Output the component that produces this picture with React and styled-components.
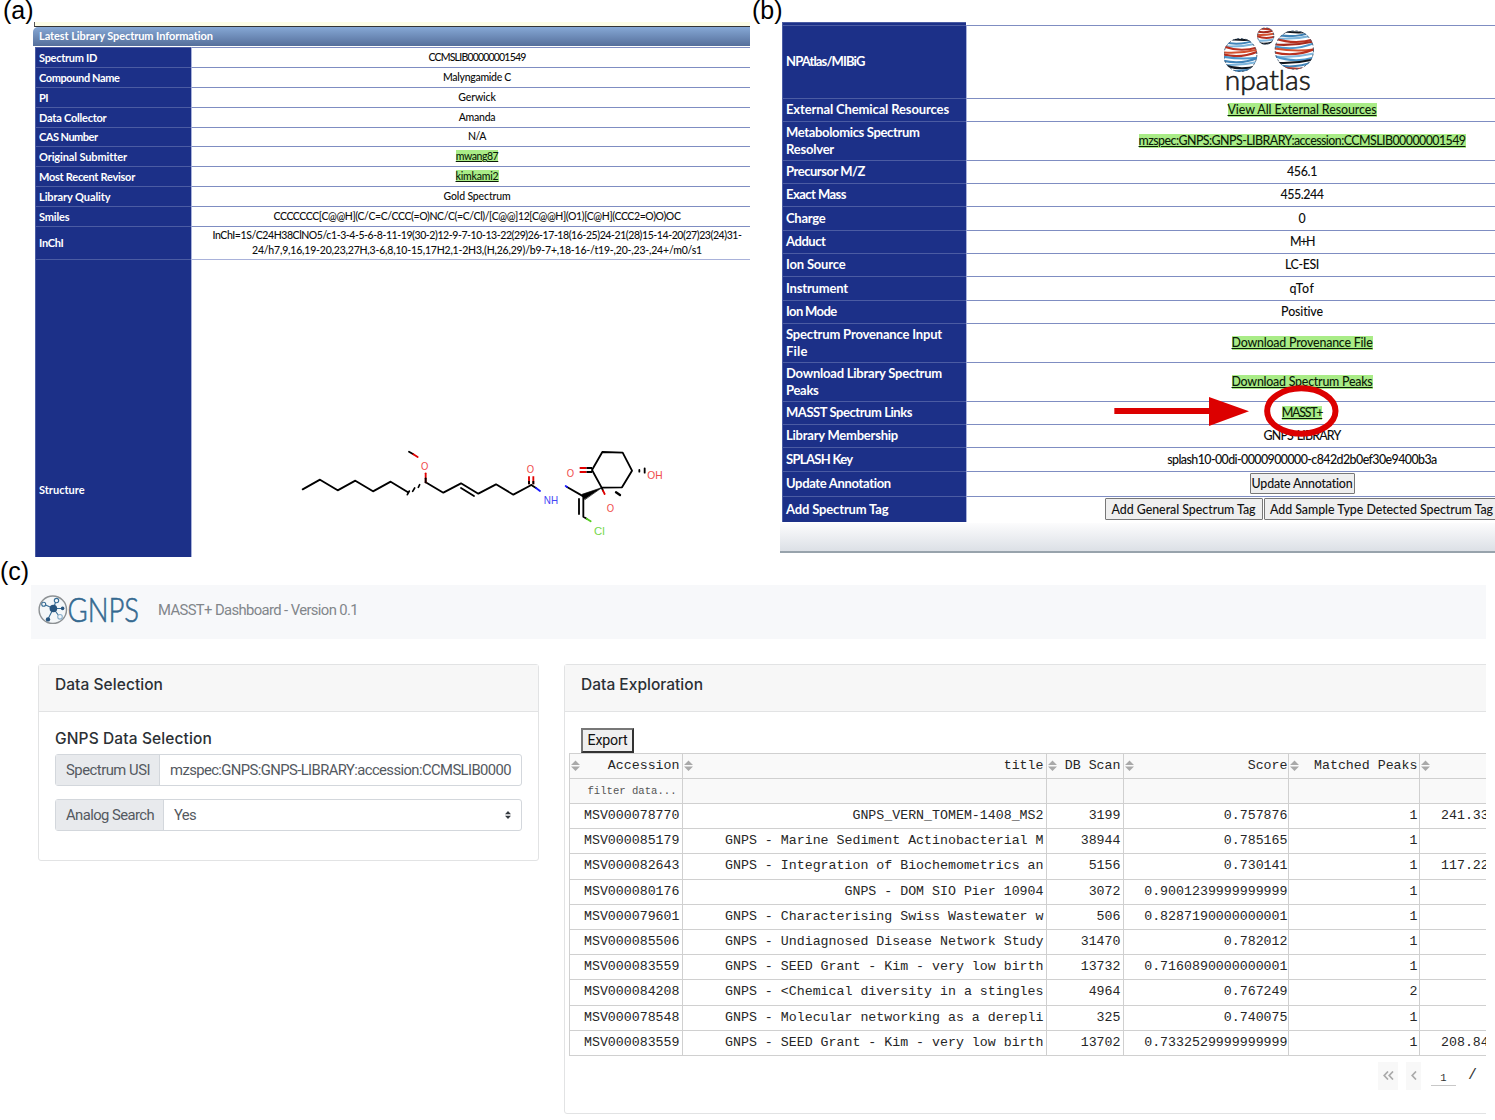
import React, { useLayoutEffect, useRef, useState } from 'react';
import styled, { createGlobalStyle } from 'styled-components';

const GlobalStyle = createGlobalStyle`
  * { box-sizing: border-box; }
  body { margin: 0; background: #fff; }
`;

const humanist = 'Lato, "Open Sans", sans-serif';
const grotesk = 'Inter, "Liberation Sans", sans-serif';
const grotesque = 'Roboto, "Liberation Sans", sans-serif';
const mono = '"Liberation Mono", monospace';

/* ---------- text tracked out to a fixed measure ---------- */
const Run = styled.span`
  display: inline-block;
  white-space: nowrap;
  text-decoration: inherit;
`;

function Fit({ w, children }) {
  const ref = useRef(null);
  const [spacing, setSpacing] = useState(0);
  useLayoutEffect(() => {
    const natural = ref.current.getBoundingClientRect().width;
    setSpacing((w - natural) / children.length);
  }, [w, children]);
  return (
    <Run ref={ref} style={{ letterSpacing: `${spacing}px` }}>
      {children}
    </Run>
  );
}

/* ---------- figure ---------- */
const Page = styled.main`
  width: 1495px;
  height: 1120px;
  overflow: hidden;
  background: #fff;
`;
const Top = styled.div`
  display: flex;
  height: 563px;
`;
const Panel = styled.section`
  position: relative;
  width: ${(p) => p.$w}px;
  overflow: hidden;
`;
const Caption = styled.h2`
  margin: 0;
  height: 22px;
  padding-left: ${(p) => p.$indent}px;
  font: 400 25px/${(p) => p.$line}px "Liberation Sans", Arial, sans-serif;
  color: #000;
`;
const Sheet = styled.div`
  margin-left: ${(p) => p.$left}px;
`;

/* ---------- record tables ---------- */
const Strip = styled.div`
  height: 5px;
  margin-left: 1px;
  background: #fdfde6;
  border-left: 1px solid #555;
  border-bottom: 1px solid #333;
`;
const TitleBar = styled.div`
  height: 19px;
  padding-left: 6px;
  border-radius: 5px 0 0 0;
  background: linear-gradient(#86a8d5, #556f9b);
  color: #fff;
  font: 700 11px/18px ${humanist};
`;
const Records = styled.div`
  margin: ${(p) => p.$margin || '0'};
  width: ${(p) => p.$w}px;
  font: 400 ${(p) => p.$size}px/${(p) => p.$line}px ${humanist};
`;
const Record = styled.div`
  display: flex;
  height: ${(p) => p.$h}px;
`;
const Name = styled.div`
  flex: none;
  width: ${(p) => p.$w}px;
  display: flex;
  flex-direction: column;
  align-items: flex-start;
  justify-content: center;
  padding: 0 0 1px 3px;
  background: #1c3088;
  border-top: 1px solid #4b5ca3;
  border-left: 1px solid #4b5ca3;
  color: #fff;
  font-weight: 700;
`;
const Value = styled.div`
  flex: 1;
  display: flex;
  flex-direction: ${(p) => (p.$stack ? 'column' : 'row')};
  align-items: center;
  justify-content: center;
  padding-bottom: 1px;
  border-top: 1px solid #7f8dc2;
  border-left: 1px solid #a9b2da;
  color: #0c0c0c;
  font-size: 0.955em;
  font-weight: 500;
`;
const Link = styled.a`
  background: #a9ec87;
  color: #0c1c08;
  text-decoration: underline;
  text-underline-offset: 1px;
  line-height: ${(p) => p.$h}px;
`;
const PushButton = styled.button`
  height: ${(p) => p.$h}px;
  padding: 0;
  width: ${(p) => p.$w}px;
  flex: none;
  border: 1px solid #777;
  border-radius: 1px;
  background: #efefef;
  color: #111;
  font: inherit;
  & + & { margin-left: 1px; }
`;
const PanelFoot = styled.div`
  height: 30px;
  width: 715px;
  margin-top: 1px;
  background: linear-gradient(#fcfcfd, #dce0e6);
  border-bottom: 2px solid #98a3ac;
`;
const Callout = styled.svg`
  position: absolute;
  left: 360px;
  top: 380px;
`;

const recordsA = [
  [20, ['Spectrum ID', 58], 'CCMSLIB00000001549', 97],
  [20, ['Compound Name', 80.5], 'Malyngamide C', 68],
  [20, ['PI', 9], 'Gerwick', 37.5],
  [20, ['Data Collector', 67.5], 'Amanda', 36.5],
  [19, ['CAS Number', 58.5], 'N/A', 18],
  [20, ['Original Submitter', 87.5], 'mwang87', 42.5, true],
  [20, ['Most Recent Revisor', 96], 'kimkami2', 43, true],
  [20, ['Library Quality', 71.5], 'Gold Spectrum', 67],
  [20, ['Smiles', 30.5], 'CCCCCCC[C@@H](C/C=C/CCC(=O)NC/C(=C/Cl)/[C@@]12[C@@H](O1)[C@H](CCC2=O)O)OC', 407],
];

const recordsB = [
  [23, [['External Chemical Resources', 163]], 'View All External Resources', 149, true],
  [39, [['Metabolomics Spectrum', 133.5], ['Resolver', 48]], 'mzspec:GNPS:GNPS-LIBRARY:accession:CCMSLIB00000001549', 327, true],
  [23, [['Precursor M/Z', 79]], '456.1', 30],
  [23, [['Exact Mass', 60]], '455.244', 43],
  [24, [['Charge', 39.5]], '0', 7],
  [23, [['Adduct', 39.5]], 'M+H', 24],
  [23, [['Ion Source', 59.5]], 'LC-ESI', 34],
  [24, [['Instrument', 62]], 'qTof', 25],
  [23, [['Ion Mode', 50.5]], 'Positive', 42],
  [39, [['Spectrum Provenance Input', 156], ['File', 21.5]], 'Download Provenance File', 141, true],
  [39, [['Download Library Spectrum', 156], ['Peaks', 32.5]], 'Download Spectrum Peaks', 141, true],
  [23, [['MASST Spectrum Links', 126]], 'MASST+', 40.5, true],
  [23, [['Library Membership', 112]], 'GNPS-LIBRARY', 77],
  [24, [['SPLASH Key', 66.5]], 'splash10-00di-0000900000-c842d2b0ef30e9400b3a', 269.5],
];

/* ---------- drawings ---------- */
const MoleculeSlot = styled.div`
  flex: 1;
  padding: 170px 0 0 98px;
  border-top: 1px solid #a9b2da;
  border-left: 1px solid #a9b2da;
`;

function Molecule() {
  return (
    <svg width="390" height="130" viewBox="0 0 1170 390" fill="none" stroke="#000" strokeWidth="5.5" strokeLinecap="round" strokeLinejoin="round">
      <path d="M38 178L90 149L143 181L196 152L249 184L302 155L354 187" />
      <path d="M352 194l6-11M368 184l6-10M385 172l4-8" strokeWidth="5" />
      <path d="M407 157L460 188L513 160L565 191L618 163L670 194L724 165" />
      <path d="M513 174L552 198" />
      <path d="M407 157V130" stroke="#e00000" />
      <path d="M407 157V145" />
      <path d="M357 65L370 73" /><path d="M370 73L383 81" stroke="#e00000" />
      <path d="M717 163V139M730 163V139" stroke="#e00000" strokeLinecap="butt" />
      <path d="M717 163V153M730 163V153" strokeLinecap="butt" />
      <path d="M724 165L738 174" /><path d="M738 174L750 183" stroke="#1a1aff" />
      <path d="M831 171L880 199" /><path d="M827 168L831 171" stroke="#1a1aff" />
      <path d="M880 199V260L890 266M867 207V252" />
      <path d="M890 266L902 274" stroke="#55cc22" />
      <path d="M935 173L876 193L884 208Z" fill="#000" strokeWidth="2" />
      <path d="M935 173L906 120L937 66L998 68L1026 122L996 172L935 173" />
      <path d="M906 114H889M906 126H889" strokeLinecap="butt" />
      <path d="M889 114H869M889 126H869" stroke="#e00000" strokeLinecap="butt" />
      <path d="M935 173L939 182" /><path d="M939 182L944 192" stroke="#e00000" />
      <path d="M978 187L990 195" strokeWidth="7" />
      <path d="M1048 120v5M1064 115v13" />
      <g stroke="none" fontFamily="Liberation Sans, Arial, sans-serif" fontSize="34" textAnchor="middle" fill="#f04a4a">
        <text x="404" y="119" textLength="22" lengthAdjust="spacingAndGlyphs">O</text>
        <text x="721" y="129" textLength="22" lengthAdjust="spacingAndGlyphs">O</text>
        <text x="841" y="141" textLength="22" lengthAdjust="spacingAndGlyphs">O</text>
        <text x="961" y="247" textLength="22" lengthAdjust="spacingAndGlyphs">O</text>
        <text x="1095" y="147" textLength="46" lengthAdjust="spacingAndGlyphs">OH</text>
        <text x="783" y="221" fill="#4545f5" textLength="43" lengthAdjust="spacingAndGlyphs">NH</text>
        <text x="928" y="315" fill="#74d84a">Cl</text>
      </g>
    </svg>
  );
}

const bands = ['#10161d', '#3f83b8', '#b93120', '#7db5dc', '#d4512e', '#ffffff', '#4d97cc', '#a62a1c', '#83b8de'];

function Globe({ id, cx, cy, r, order }) {
  const n = order.length;
  return (
    <g>
      <clipPath id={id}><circle cx={cx} cy={cy} r={r} /></clipPath>
      <g clipPath={`url(#${id})`} fill="none">
        {order.map((c, i) => {
          const y = cy - r + ((i + 0.5) * 2 * r) / n;
          const bow = r * (i % 2 ? 0.22 : 0.1);
          const tilt = r * (i % 3 ? 0.08 : -0.03);
          return (
            <path
              key={i}
              d={`M${cx - r} ${y + tilt - bow / 2}Q${cx} ${y + bow} ${cx + r} ${y - tilt - bow / 2}`}
              stroke={bands[c]}
              strokeWidth={(r / n) * 1.35}
            />
          );
        })}
      </g>
      <circle cx={cx} cy={cy} r={r - 1.5} fill="none" stroke="#4b6178" strokeWidth="3" strokeDasharray="7 6" />
    </g>
  );
}

function AtlasLogo() {
  return (
    <svg width="156" height="71" viewBox="312 78 468 213">
      <Globe id="g1" cx={361} cy={165} r={51} order={[0, 1, 3, 2, 4, 2, 6, 1, 3, 0, 1]} />
      <Globe id="g2" cx={437} cy={108} r={26} order={[2, 7, 4, 2, 3, 0]} />
      <Globe id="g3" cx={523} cy={150} r={59} order={[0, 1, 3, 2, 7, 6, 4, 2, 8, 6, 0, 1, 2]} />
      <text x="314" y="271" fontFamily="Lato, sans-serif" fontWeight="300" fontSize="82" fill="#1a1a1a" stroke="#1a1a1a" strokeWidth="1.8" textLength="258" lengthAdjust="spacingAndGlyphs">npatlas</text>
    </svg>
  );
}

function GnpsLogo() {
  return (
    <svg width="104" height="34" viewBox="0 0 104 34">
      <circle cx="14.8" cy="15.7" r="13.7" fill="#f4f7f9" stroke="#8d9194" strokeWidth="1.4" />
      <g stroke="#376d96" strokeWidth="1.1" fill="none">
        <path d="M15.4 14.5L6.5 10.5M15.4 14.5L18 7M15.4 14.5H24M15.4 14.5L10.5 24M15.4 14.5L21 22" />
        <circle cx="5.7" cy="10.3" r="2" fill="#f4f7f9" />
        <circle cx="18.5" cy="6.6" r="2.2" fill="#f4f7f9" />
        <circle cx="22" cy="22.8" r="2.3" fill="#f4f7f9" stroke="#8ab0cc" />
      </g>
      <g fill="#28557f">
        <circle cx="15.4" cy="14.5" r="3.8" />
        <circle cx="24.6" cy="14.4" r="1.8" />
        <circle cx="10" cy="25.4" r="2.2" />
      </g>
      <text x="29.5" y="28" fontFamily="Lato, sans-serif" fontWeight="300" fontSize="33.5" fill="#346990" stroke="#346990" strokeWidth="0.6" textLength="71.5" lengthAdjust="spacingAndGlyphs">GNPS</text>
    </svg>
  );
}

/* ---------- dashboard ---------- */
const Dashboard = styled.section`
  width: 1455px;
  height: 535px;
  margin-left: 31px;
  overflow: hidden;
  font-family: ${grotesk};
  color: #2b3035;
`;
const NavBar = styled.header`
  display: flex;
  height: 54px;
  padding: 9px 0 0 7px;
  background: #f7f8fa;
`;
const Brand = styled.div`
  padding: 0 0 0 16px;
  font: 400 14.8px/32px ${grotesque};
  color: #82868a;
`;
const Cards = styled.div`
  display: flex;
  align-items: flex-start;
  gap: 25px;
  padding: 25px 0 0 7px;
`;
const Card = styled.article`
  flex: none;
  width: ${(p) => p.$w}px;
  height: ${(p) => p.$h}px;
  border: 1px solid #e2e3e4;
  border-radius: 3px;
`;
const CardHead = styled.h5`
  margin: 0;
  height: 47px;
  padding: 0 16px;
  background: #f7f7f7;
  border-bottom: 1px solid #e2e3e4;
  font-size: 15.5px;
  font-weight: 500;
  line-height: 40px;
`;
const Form = styled.div`
  padding: 15px 16px;
`;
const FormTitle = styled.h5`
  margin: 0;
  height: 27px;
  font-size: 15.5px;
  font-weight: 500;
  line-height: 24px;
`;
const Field = styled.label`
  display: flex;
  height: 32px;
  width: 467px;
  margin-bottom: 13px;
  border: 1px solid #d3d7dc;
  border-radius: 3px;
  font: 400 14.8px/30px ${grotesque};
  color: #54595f;
`;
const Prefix = styled.span`
  width: ${(p) => p.$w}px;
  padding-left: 10px;
  background: #e8eaed;
  border-right: 1px solid #d3d7dc;
`;
const Control = styled.span`
  flex: 1;
  display: flex;
  align-items: center;
  justify-content: space-between;
  padding: 0 10px;
`;
const ExportButton = styled.button`
  display: block;
  width: 53px;
  height: 25px;
  margin: 16px 0 0 16px;
  padding: 0;
  border: 2px solid;
  border-color: #777 #333 #333 #777;
  background: #efefef;
  color: #111;
  font: 400 14.2px/19px ${grotesque};
`;
const Grid = styled.div`
  margin-left: 4px;
  width: 940px;
  border-left: 1px solid #d0d0d0;
  border-bottom: 1px solid #d0d0d0;
  font: 400 13.28px/24px ${mono};
  color: #262626;
`;
const GridRow = styled.div`
  display: grid;
  grid-template-columns: 113px 364px 77px 165px 131px 90px;
  height: ${(p) => (p.$head ? 25 : 25.2)}px;
  border-top: 1px solid #d0d0d0;
  background: ${(p) => (p.$head ? '#f9f9f9' : '#fff')};
`;
const Cell = styled.div`
  display: flex;
  align-items: center;
  justify-content: ${(p) => (p.$start ? 'flex-start' : 'flex-end')};
  padding: 0 ${(p) => p.$end ?? 2.5}px 0 ${(p) => (p.$start ? 21 : 0)}px;
  border-right: 1px solid #d0d0d0;
  white-space: pre;
  overflow: hidden;
`;
const HeadCell = styled(Cell)`
  justify-content: space-between;
  padding-left: 1px;
`;
const Filter = styled.span`
  padding-right: 3px;
  font-size: 10.6px;
  color: #555;
`;
const Pager = styled.nav`
  display: flex;
  margin: 6px 0 0 813px;
  height: 28px;
  align-items: stretch;
  font: 400 15px/28px ${mono};
  color: #333;
`;
const PageButton = styled.button`
  width: ${(p) => p.$w}px;
  margin-right: ${(p) => p.$gap}px;
  padding: 0;
  border: 0;
  background: #f8f8f8;
  display: flex;
  align-items: center;
  justify-content: center;
`;
const PageNumber = styled.span`
  width: 25px;
  height: 24px;
  margin-right: 12px;
  border-bottom: 1px solid #c8c8c8;
  text-align: center;
  font-size: 10.5px;
  line-height: 32px;
`;

const SortIcon = () => (
  <svg width="9" height="12" viewBox="0 0 9 12" fill="#a9a9a9"><path d="M0 5L4.5 0.5L9 5ZM0 6.5H9L4.5 11Z" /></svg>
);

const headings = ['Accession', 'title', 'DB Scan', 'Score', 'Matched Peaks'];
const rows = [
  ['MSV000078770', 'GNPS_VERN_TOMEM-1408_MS2', '3199', '0.757876', '1', '241.33'],
  ['MSV000085179', 'GNPS - Marine Sediment Actinobacterial M', '38944', '0.785165', '1', ''],
  ['MSV000082643', 'GNPS - Integration of Biochemometrics an', '5156', '0.730141', '1', '117.22'],
  ['MSV000080176', 'GNPS - DOM SIO Pier 10904', '3072', '0.9001239999999999', '1', ''],
  ['MSV000079601', 'GNPS - Characterising Swiss Wastewater w', '506', '0.8287190000000001', '1', ''],
  ['MSV000085506', 'GNPS - Undiagnosed Disease Network Study', '31470', '0.782012', '1', ''],
  ['MSV000083559', 'GNPS - SEED Grant - Kim - very low birth', '13732', '0.7160890000000001', '1', ''],
  ['MSV000084208', 'GNPS - <Chemical diversity in a stingles', '4964', '0.767249', '2', ''],
  ['MSV000078548', 'GNPS - Molecular networking as a derepli', '325', '0.740075', '1', ''],
  ['MSV000083559', 'GNPS - SEED Grant - Kim - very low birth', '13702', '0.7332529999999999', '1', '208.84'],
];
const endPads = [2.5, 2.5, 2.5, 0.5, 1.5, 0];

const StructureName = styled(Name)`
  justify-content: flex-start;
  padding-top: 222px;
`;

export default function App() {
  return (
    <Page>
      <GlobalStyle />
      <Top>
        <Panel $w={750}>
          <Caption $indent={3} $line={21}>(a)</Caption>
          <Sheet $left={33}>
            <Strip />
            <TitleBar><Fit w={174}>Latest Library Spectrum Information</Fit></TitleBar>
            <Records $w={727} $size={11} $line={15} $margin="1px 0 0 2px">
              {recordsA.map(([h, [name, nw], value, vw, link]) => (
                <Record key={name} $h={h}>
                  <Name $w={156}><Fit w={nw}>{name}</Fit></Name>
                  <Value>{link ? <Link $h={12}><Fit w={vw}>{value}</Fit></Link> : <Fit w={vw}>{value}</Fit>}</Value>
                </Record>
              ))}
              <Record $h={33}>
                <Name $w={156}><Fit w={24.5}>InChI</Fit></Name>
                <Value $stack>
                  <Fit w={529}>InChI=1S/C24H38ClNO5/c1-3-4-5-6-8-11-19(30-2)12-9-7-10-13-22(29)26-17-18(16-25)24-21(28)15-14-20(27)23(24)31-</Fit>
                  <Fit w={450}>24/h7,9,16,19-20,23,27H,3-6,8,10-15,17H2,1-2H3,(H,26,29)/b9-7+,18-16-/t19-,20-,23-,24+/m0/s1</Fit>
                </Value>
              </Record>
              <Record $h={298}>
                <StructureName $w={156}><Fit w={45.5}>Structure</Fit></StructureName>
                <MoleculeSlot><Molecule /></MoleculeSlot>
              </Record>
            </Records>
          </Sheet>
        </Panel>
        <Panel $w={745}>
          <Caption $indent={2} $line={21}>(b)</Caption>
          <Sheet $left={30}>
            <Records $w={855} $size={13} $line={17} $margin="0 0 0 2px">
              <Record $h={3}><Name $w={184} /></Record>
              <Record $h={73}>
                <Name $w={184}><Fit w={78.5}>NPAtlas/MIBiG</Fit></Name>
                <Value><AtlasLogo /></Value>
              </Record>
              {recordsB.map(([h, names, value, vw, link]) => (
                <Record key={names[0][0]} $h={h}>
                  <Name $w={184}>{names.map(([t, w]) => <Fit key={t} w={w}>{t}</Fit>)}</Name>
                  <Value>{link ? <Link $h={14}><Fit w={vw}>{value}</Fit></Link> : <Fit w={vw}>{value}</Fit>}</Value>
                </Record>
              ))}
              <Record $h={25}>
                <Name $w={184}><Fit w={105}>Update Annotation</Fit></Name>
                <Value><PushButton $w={105} $h={21}><Fit w={101}>Update Annotation</Fit></PushButton></Value>
              </Record>
              <Record $h={26}>
                <Name $w={184}><Fit w={102.5}>Add Spectrum Tag</Fit></Name>
                <Value>
                  <PushButton $w={158} $h={22}><Fit w={144}>Add General Spectrum Tag</Fit></PushButton>
                  <PushButton $w={236} $h={22}><Fit w={223}>Add Sample Type Detected Spectrum Tag</Fit></PushButton>
                </Value>
              </Record>
            </Records>
            <PanelFoot />
          </Sheet>
          <Callout width="240" height="60" viewBox="60 180 720 180">
            <path d="M73 264H357V231L477 274L357 318V282H73Z" fill="#dc0000" />
            <ellipse cx="634" cy="273" rx="102.5" ry="68" fill="none" stroke="#dc0000" strokeWidth="18" />
          </Callout>
        </Panel>
      </Top>
      <Caption $indent={0} $line={16}>(c)</Caption>
      <Dashboard>
        <NavBar>
          <GnpsLogo />
          <Brand><Fit w={200}>MASST+ Dashboard - Version 0.1</Fit></Brand>
        </NavBar>
        <Cards>
          <Card $w={501} $h={197}>
            <CardHead><Fit w={108}>Data Selection</Fit></CardHead>
            <Form>
              <FormTitle><Fit w={157}>GNPS Data Selection</Fit></FormTitle>
              <Field>
                <Prefix $w={104}><Fit w={84}>Spectrum USI</Fit></Prefix>
                <Control><Fit w={341}>mzspec:GNPS:GNPS-LIBRARY:accession:CCMSLIB0000</Fit></Control>
              </Field>
              <Field>
                <Prefix $w={108}><Fit w={88}>Analog Search</Fit></Prefix>
                <Control>
                  <Fit w={22}>Yes</Fit>
                  <svg width="6" height="8" viewBox="0 0 6 8" fill="#343a40"><path d="M0 3.2L3 0L6 3.2ZM0 4.8H6L3 8Z" /></svg>
                </Control>
              </Field>
            </Form>
          </Card>
          <Card $w={960} $h={450}>
            <CardHead><Fit w={122}>Data Exploration</Fit></CardHead>
            <ExportButton><Fit w={40}>Export</Fit></ExportButton>
            <Grid>
              <GridRow $head>
                {headings.map((h, j) => <HeadCell key={h} $end={endPads[j]}><SortIcon />{h}</HeadCell>)}
                <HeadCell><SortIcon /></HeadCell>
              </GridRow>
              <GridRow $head>
                <Cell><Filter>filter data...</Filter></Cell>
                <Cell /><Cell /><Cell /><Cell /><Cell />
              </GridRow>
              {rows.map((r, i) => (
                <GridRow key={i}>
                  {r.map((c, j) => <Cell key={j} $start={j === 5} $end={endPads[j]}>{c}</Cell>)}
                </GridRow>
              ))}
            </Grid>
            <Pager>
              <PageButton $w={20} $gap={8}>
                <svg width="11" height="9" viewBox="0 0 11 9" fill="none" stroke="#aaa" strokeWidth="1.7"><path d="M5 0.5L1.2 4.5L5 8.5M10 0.5L6.2 4.5L10 8.5" /></svg>
              </PageButton>
              <PageButton $w={15} $gap={10}>
                <svg width="6" height="9" viewBox="0 0 6 9" fill="none" stroke="#aaa" strokeWidth="1.7"><path d="M5 0.5L1.2 4.5L5 8.5" /></svg>
              </PageButton>
              <PageNumber>1</PageNumber>
              <span>/</span>
            </Pager>
          </Card>
        </Cards>
      </Dashboard>
    </Page>
  );
}
